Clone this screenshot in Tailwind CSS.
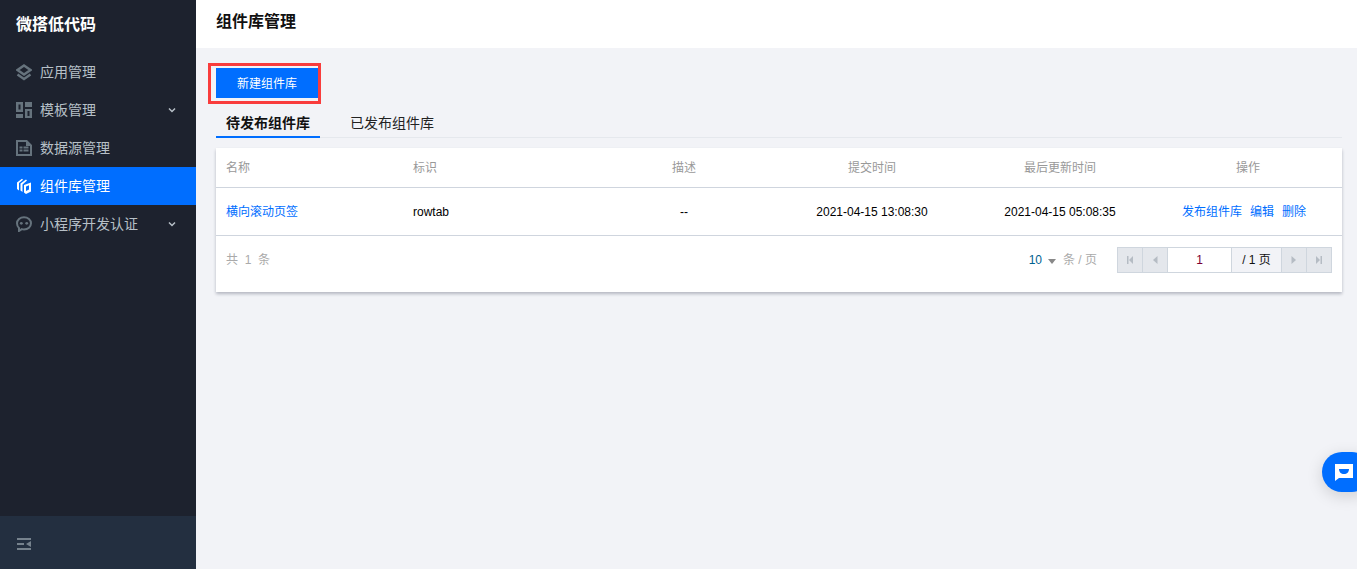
<!DOCTYPE html>
<html lang="zh-CN">
<head>
  <meta charset="UTF-8" />
  <title>组件库管理</title>
  <script src="https://cdn.jsdelivr.net/npm/@tailwindcss/browser@4"></script>
</head>
<body class="bg-[#f2f3f7] font-['Liberation_Sans','Noto_Sans_CJK_SC',sans-serif] text-xs overflow-hidden">
<div class="flex h-[569px] w-[1357px] relative overflow-hidden">

  <!-- Sidebar -->
  <aside class="w-[196px] shrink-0 bg-[#1d222e] flex flex-col">
    <div class="h-[53px] pl-4 flex items-center text-base font-bold text-white pb-[3px]">微搭低代码</div>
    <nav class="flex-1 text-sm text-[#b7c0c7]">
      <a class="h-[38px] flex items-center pl-4">
        <svg class="w-4 h-[17px] mr-2 text-[#66737d]" viewBox="0 0 16 17" fill="none" stroke="currentColor" stroke-width="2.400"><path d="M8 1.500 14.500 6 8 10.500 1.500 6Z"/><path d="M1.500 10.500 8 15l6.500-4.500"/></svg>
        应用管理
      </a>
      <a class="h-[38px] flex items-center pl-4 relative">
        <svg class="w-4 h-4 mr-2 text-[#66737d]" viewBox="0 0 16 16" fill="currentColor"><path fill-rule="evenodd" d="M0 0h7v10H0ZM2.500 2.500v5h2v-5Z"/><path d="M9 0h7v5H9ZM0 12h7v4H0Z"/><path fill-rule="evenodd" d="M9 7h7v9H9ZM11.500 9v5h2V9Z"/></svg>
        模板管理
        <svg class="w-2 h-2 absolute left-[168px] top-[15px] text-[#b7c0c7]" viewBox="0 0 8 8" fill="none" stroke="currentColor" stroke-width="1.500"><path d="M1 2.500 4 5.500 7 2.500"/></svg>
      </a>
      <a class="h-[38px] flex items-center pl-4">
        <svg class="w-4 h-4 mr-2 text-[#66737d]" viewBox="0 0 16 16" fill="currentColor"><path fill-rule="evenodd" d="M0 0h11l5 5v11H0ZM2 2v12h12V6H10V2ZM3.500 6.500h3v2h-3ZM7.500 6.500h5v2h-5ZM3.500 9.500h3v2h-3ZM7.500 9.500h5v2h-5Z"/></svg>
        数据源管理
      </a>
      <a class="h-[38px] flex items-center pl-4 bg-[#006eff] text-white">
        <svg class="w-4 h-4 mr-2" viewBox="0 0 16 16" fill="#fff"><path d="M1 4.500 6 .800l1 1L3 5v7.500L1 11Z"/><path d="M4.500 5.500 10 1.500l1 1L6.500 6.500V14l-2-1.500Z"/><path fill-rule="evenodd" d="M8 7 15 4.500v9L10 16l-2-1.500ZM10 8.400v4.600l3-1.500V7.300Z"/></svg>
        组件库管理
      </a>
      <a class="h-[38px] flex items-center pl-4 relative">
        <svg class="w-4 h-4 mr-2 text-[#66737d]" viewBox="0 0 16 16" fill="none"><path d="M8 1.200c3.900 0 7 2.600 7 6.100s-3.100 6.100-7 6.100c-.8 0-1.500-.1-2.200-.3L3 15v-2.900C1.800 11 1 9.300 1 7.300c0-3.500 3.100-6.100 7-6.100Z" stroke="currentColor" stroke-width="2"/><circle cx="5.300" cy="7.300" r="1.400" fill="currentColor"/><circle cx="10.700" cy="7.300" r="1.400" fill="currentColor"/></svg>
        小程序开发认证
        <svg class="w-2 h-2 absolute left-[168px] top-[15px] text-[#b7c0c7]" viewBox="0 0 8 8" fill="none" stroke="currentColor" stroke-width="1.500"><path d="M1 2.500 4 5.500 7 2.500"/></svg>
      </a>
    </nav>
    <div class="h-[53px] bg-[#232f40] flex items-center pl-[17px] pt-[2px]">
      <svg class="w-[14px] h-3 text-[#76828d]" viewBox="0 0 14 12" fill="currentColor"><path d="M0 0h14v2H0ZM0 5h7v2H0ZM0 10h14v2H0ZM9 6l5-3v6Z"/></svg>
    </div>
  </aside>

  <!-- Main -->
  <main class="flex-1 min-w-0 flex flex-col">
    <header class="h-12 bg-white pl-5 pt-3 text-base leading-5 font-bold text-[#111]">组件库管理</header>

    <div class="pl-5 pr-[15px] pt-5">
      <div class="w-[102px] h-[30px] pt-[2px] bg-[#006eff] text-white flex items-center justify-center relative">
        新建组件库
        <!-- red annotation box round the button -->
        <div class="absolute left-[-8px] top-[-5px] w-[113px] h-[41px] border-[3px] border-[#f93c3c]"></div>
      </div>

      <div class="flex mt-[14px] h-[26px] border-b border-[#e5e8ed] text-sm text-[#222]">
        <div class="w-[104px] h-[26px] text-center leading-[23px] font-bold text-[#111] border-b-2 border-[#006eff]">待发布组件库</div>
        <div class="pl-[30px] leading-[23px]">已发布组件库</div>
      </div>

      <section class="mt-[10px] bg-white shadow-[0_2px_3px_rgba(54,58,80,0.32)] h-[144px]">
        <div class="grid grid-cols-[197px_177px_188px_188px_188px_188px] h-10 items-center text-[#999] border-b border-[#cfd5de]">
          <div class="pl-[10px]">名称</div>
          <div>标识</div>
          <div class="text-center">描述</div>
          <div class="text-center">提交时间</div>
          <div class="text-center">最后更新时间</div>
          <div class="text-center">操作</div>
        </div>
        <div class="grid grid-cols-[197px_177px_188px_188px_188px_188px] h-[48px] items-center text-[#000] border-b border-[#cfd5de]">
          <div class="pl-[10px] text-[#006eff]">横向滚动页签</div>
          <div>rowtab</div>
          <div class="text-center">--</div>
          <div class="text-center">2021-04-15 13:08:30</div>
          <div class="text-center">2021-04-15 05:08:35</div>
          <div class="flex gap-2 pl-7 text-[#006eff]"><span>发布组件库</span><span>编辑</span><span>删除</span></div>
        </div>
        <div class="flex items-center h-[48px] pl-[10px] pr-[10px] text-[#aaa]">
          <span>共&nbsp; 1&nbsp; 条</span>
          <span class="ml-auto text-[#00618f]">10</span>
          <span class="ml-[6px] w-0 h-0 border-x-[4.500px] border-x-transparent border-t-[5px] border-t-[#888] mt-[2px]"></span>
          <span class="ml-[7px] mr-5">条 / 页</span>
          <div class="flex h-[26px] border border-[#cfd6de]">
            <div class="w-[25px] bg-[#e4e7ec] border-r border-[#cfd6de] flex items-center justify-center">
              <svg class="w-2 h-[10px]" viewBox="0 0 8 10" fill="#b5bcc4"><path d="M1 1h1.500v8H1ZM7 1v8L3 5Z"/></svg>
            </div>
            <div class="w-[25px] bg-[#e4e7ec] border-r border-[#cfd6de] flex items-center justify-center">
              <svg class="w-2 h-[10px]" viewBox="0 0 8 10" fill="#b5bcc4"><path d="M6.500 1v8L2 5Z"/></svg>
            </div>
            <div class="w-[64px] bg-white border-r border-[#cfd6de] flex items-center justify-center text-[#7a0033]">1</div>
            <div class="w-[50px] bg-[#f2f3f7] border-r border-[#cfd6de] flex items-center justify-center text-[#111]">/ 1 页</div>
            <div class="w-[25px] bg-[#e4e7ec] border-r border-[#cfd6de] flex items-center justify-center">
              <svg class="w-2 h-[10px]" viewBox="0 0 8 10" fill="#b5bcc4"><path d="M1.500 1v8L6 5Z"/></svg>
            </div>
            <div class="w-[24px] bg-[#e4e7ec] flex items-center justify-center">
              <svg class="w-2 h-[10px]" viewBox="0 0 8 10" fill="#b5bcc4"><path d="M1 1v8L5 5ZM5.500 1H7v8H5.500Z"/></svg>
            </div>
          </div>
        </div>
      </section>
    </div>
  </main>

  <!-- Floating chat button -->
  <div class="absolute left-[1322px] top-[452px] w-[50px] h-10 rounded-full bg-[#006eff] shadow-[0_4px_16px_rgba(0,0,0,0.15)] flex items-start pl-[13px] pt-[12px]">
    <svg class="w-[18px] h-[18px]" viewBox="0 0 18 18"><path d="M0 0h18v14H4L0 17Z" fill="#fff"/><path d="M4 5h10c0 3-2 5-5 5S4 8 4 5Z" fill="#006eff"/></svg>
  </div>
</div>
</body>
</html>
